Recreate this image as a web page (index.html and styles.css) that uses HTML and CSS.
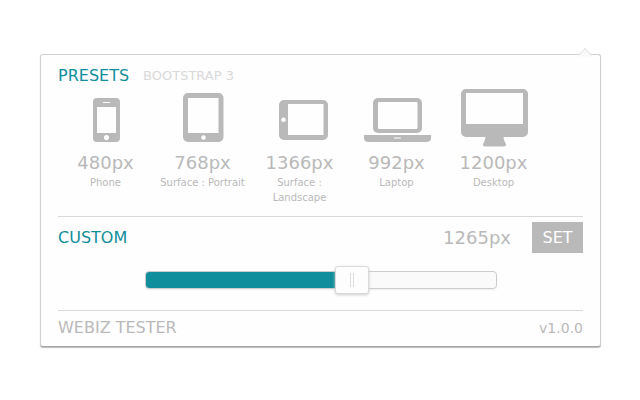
FILE: index.html
```
<!DOCTYPE html>
<html lang="en">
<head>
	<meta charset="UTF-8">
	<title>Webiz Tester</title>
	<meta name="viewport" content="width=device-width,initial-scale=1"/>
	<link rel="stylesheet" href="styles.css">
</head>
<body>
	<main class="popup">
		<header class="head">
			<h1 class="title">PRESETS</h1>
			<span class="framework">BOOTSTRAP 3</span>
		</header>
		<div class="presets">
			<button type="button" class="preset" data-width="480">
				<svg class="icon" viewBox="0 0 71 60" aria-hidden="true">
					<path fill-rule="evenodd" d="M27 10h19a4 4 0 0 1 4 4v36a4 4 0 0 1-4 4H27a4 4 0 0 1-4-4V14a4 4 0 0 1 4-4zM27 19v26h19V19zM33 14v1h7v-1zM36.500 47a2.600 2.600 0 1 0 .01 0z"/>
				</svg>
				<span class="size">480px</span>
				<span class="device">Phone</span>
			</button>
			<button type="button" class="preset" data-width="768">
				<svg class="icon" viewBox="0 0 71 60" aria-hidden="true">
					<path fill-rule="evenodd" d="M21 5h30.500a5 5 0 0 1 5 5v39a5 5 0 0 1-5 5H21a5 5 0 0 1-5-5V10a5 5 0 0 1 5-5zM21 10v35h30.500V10zM36.500 47.300a2.300 2.300 0 1 0 .01 0z"/>
				</svg>
				<span class="size">768px</span>
				<span class="device">Surface : Portrait</span>
			</button>
			<button type="button" class="preset" data-width="1366">
				<svg class="icon" viewBox="0 0 71 60" aria-hidden="true">
					<path fill-rule="evenodd" d="M20 12h39a5 5 0 0 1 5 5v30a5 5 0 0 1-5 5H20a5 5 0 0 1-5-5V17a5 5 0 0 1 5-5zM24 16v31h35.500V16zM19.500 29.500a2.300 2.300 0 1 0 .01 0z"/>
				</svg>
				<span class="size">1366px</span>
				<span class="device">Surface : Landscape</span>
			</button>
			<button type="button" class="preset" data-width="992">
				<svg class="icon" viewBox="0 0 71 60" aria-hidden="true">
					<path fill-rule="evenodd" d="M17 10h39a5 5 0 0 1 5 5v25a5 5 0 0 1-5 5H17a5 5 0 0 1-5-5V15a5 5 0 0 1 5-5zM18 14a1 1 0 0 0-1 1v25a1 1 0 0 0 1 1h37.500a1 1 0 0 0 1-1V15a1 1 0 0 0-1-1z"/>
					<path fill-rule="evenodd" d="M3 47h67v3q0 4-5 4H8q-5 0-5-4zM33 49.500v1h7v-1z"/>
				</svg>
				<span class="size">992px</span>
				<span class="device">Laptop</span>
			</button>
			<button type="button" class="preset" data-width="1200">
				<svg class="icon" viewBox="0 0 71 60" aria-hidden="true">
					<path fill-rule="evenodd" d="M8 1h57a5 5 0 0 1 5 5v38a5 5 0 0 1-5 5H45.500c.5 3 .8 4.500 2 6 1 2 .5 3.500-1.500 3.500H27c-2 0-2.500-1.500-1.500-3.500 1.200-1.500 1.500-3 2-6H8a5 5 0 0 1-5-5V6a5 5 0 0 1 5-5zM8 5v31h57V5z"/>
				</svg>
				<span class="size">1200px</span>
				<span class="device">Desktop</span>
			</button>
		</div>
		<section class="custom">
			<div class="custom_row">
				<label class="title" for="range">CUSTOM</label>
				<output class="size custom_size" id="size" for="range">1265px</output>
				<button type="button" class="set_btn" id="set">SET</button>
			</div>
			<input class="slider" id="range" type="range" min="320" max="1900" value="1265" style="--fill: 60%">
		</section>
		<footer class="foot">
			<span class="name">WEBIZ TESTER</span>
			<span class="version">v1.0.0</span>
		</footer>
	</main>
	<script type="text/javascript">
		(function(){
			var range = document.getElementById('range');
			var size = document.getElementById('size');

			function update(){
				var percent = (range.value - range.min) / (range.max - range.min) * 100;
				range.style.setProperty('--fill', percent + '%');
				size.textContent = range.value + 'px';
			}

			range.addEventListener('input', update);
			document.querySelectorAll('.preset').forEach(function(btn){
				btn.addEventListener('click', function(){
					range.value = btn.dataset.width;
					update();
				});
			});
			document.getElementById('set').addEventListener('click', function(){
				window.resizeTo(Number(range.value), window.outerHeight);
			});
		})()
	</script>
</body>
</html>
```
FILE: styles.css
```
*{
	box-sizing: border-box;
}
body{
	margin: 0;
	padding: 54px 39px 40px 40px;
	background: #fff;
	color: #b9b9b9;
	font-family: Verdana, "DejaVu Sans", sans-serif;
	font-size: 16px;
}
button{
	border: 0;
	padding: 0;
	background: none;
	color: inherit;
	font: inherit;
	cursor: pointer;
}
.popup{
	position: relative;
	padding: 11px 17px 6px;
	border: 1px solid #d0d0d0;
	border-bottom-color: #a5a5a5;
	border-radius: 3px;
	background: #fefefe;
	box-shadow: 0 1px 1px #bbb;
}
/* arrow to the toolbar button */
.popup::before{
	content: "";
	position: absolute;
	top: -5px;
	right: 10px;
	width: 9px;
	height: 9px;
	border: 1px solid #e4e4e4;
	border-right: 0;
	border-bottom: 0;
	background: linear-gradient(135deg, #fafafa 60%, transparent 60%);
	transform: rotate(45deg);
}
.head{
	display: flex;
	align-items: center;
	gap: 14px;
	margin-bottom: 2px;
	line-height: 20px;
}
.title{
	margin: 0;
	color: #118e9c;
	font-size: 16px;
	font-weight: normal;
}
.framework{
	color: #d9d9d9;
	font-size: 13px;
}
.presets{
	display: grid;
	grid-template-columns: repeat(5, 1fr);
	margin: 0 41px 11px -1px;
}
.preset{
	display: flex;
	flex-direction: column;
	align-items: center;
}
.icon{
	width: 71px;
	height: 60px;
	margin-bottom: 3px;
	fill: #b9b9b9;
}
.size{
	font-size: 18px;
	line-height: 24px;
}
.device{
	font-size: 10px;
	line-height: 15px;
}
.custom{
	padding: 5px 0 16px;
	border-top: 1px solid #d9d9d9;
}
.custom_row{
	display: flex;
	align-items: center;
	margin-bottom: 13px;
}
.custom_size{
	margin-left: auto;
	margin-right: 21px;
}
.set_btn{
	min-width: 51px;
	height: 31px;
	padding: 0 10px;
	background: #b9b9b9;
	color: #fff;
}
.slider{
	-webkit-appearance: none;
	appearance: none;
	display: block;
	width: calc(100% - 173px);
	height: 28px;
	margin: 0 86px 0 87px;
	background: none;
	cursor: pointer;
}
.slider::-webkit-slider-runnable-track{
	height: 18px;
	border: 1px solid #ccc;
	border-radius: 4px;
	background: linear-gradient(to right, #118e9c var(--fill), #fafafa var(--fill));
	box-shadow: 0 1px 2px #eee;
}
.slider::-webkit-slider-thumb{
	-webkit-appearance: none;
	width: 34px;
	height: 28px;
	margin-top: -6px;
	border: 1px solid #d9d9d9;
	border-radius: 3px;
	background:
		linear-gradient(#ddd, #ddd) 14px 6px / 1px 14px no-repeat,
		linear-gradient(#ddd, #ddd) 17px 6px / 1px 14px no-repeat,
		#fdfdfd;
	box-shadow: 0 1px 3px #ccc;
}
.foot{
	display: flex;
	align-items: center;
	justify-content: space-between;
	padding-top: 5px;
	border-top: 1px solid #d9d9d9;
	line-height: 24px;
}
.version{
	font-size: 14px;
}
```
